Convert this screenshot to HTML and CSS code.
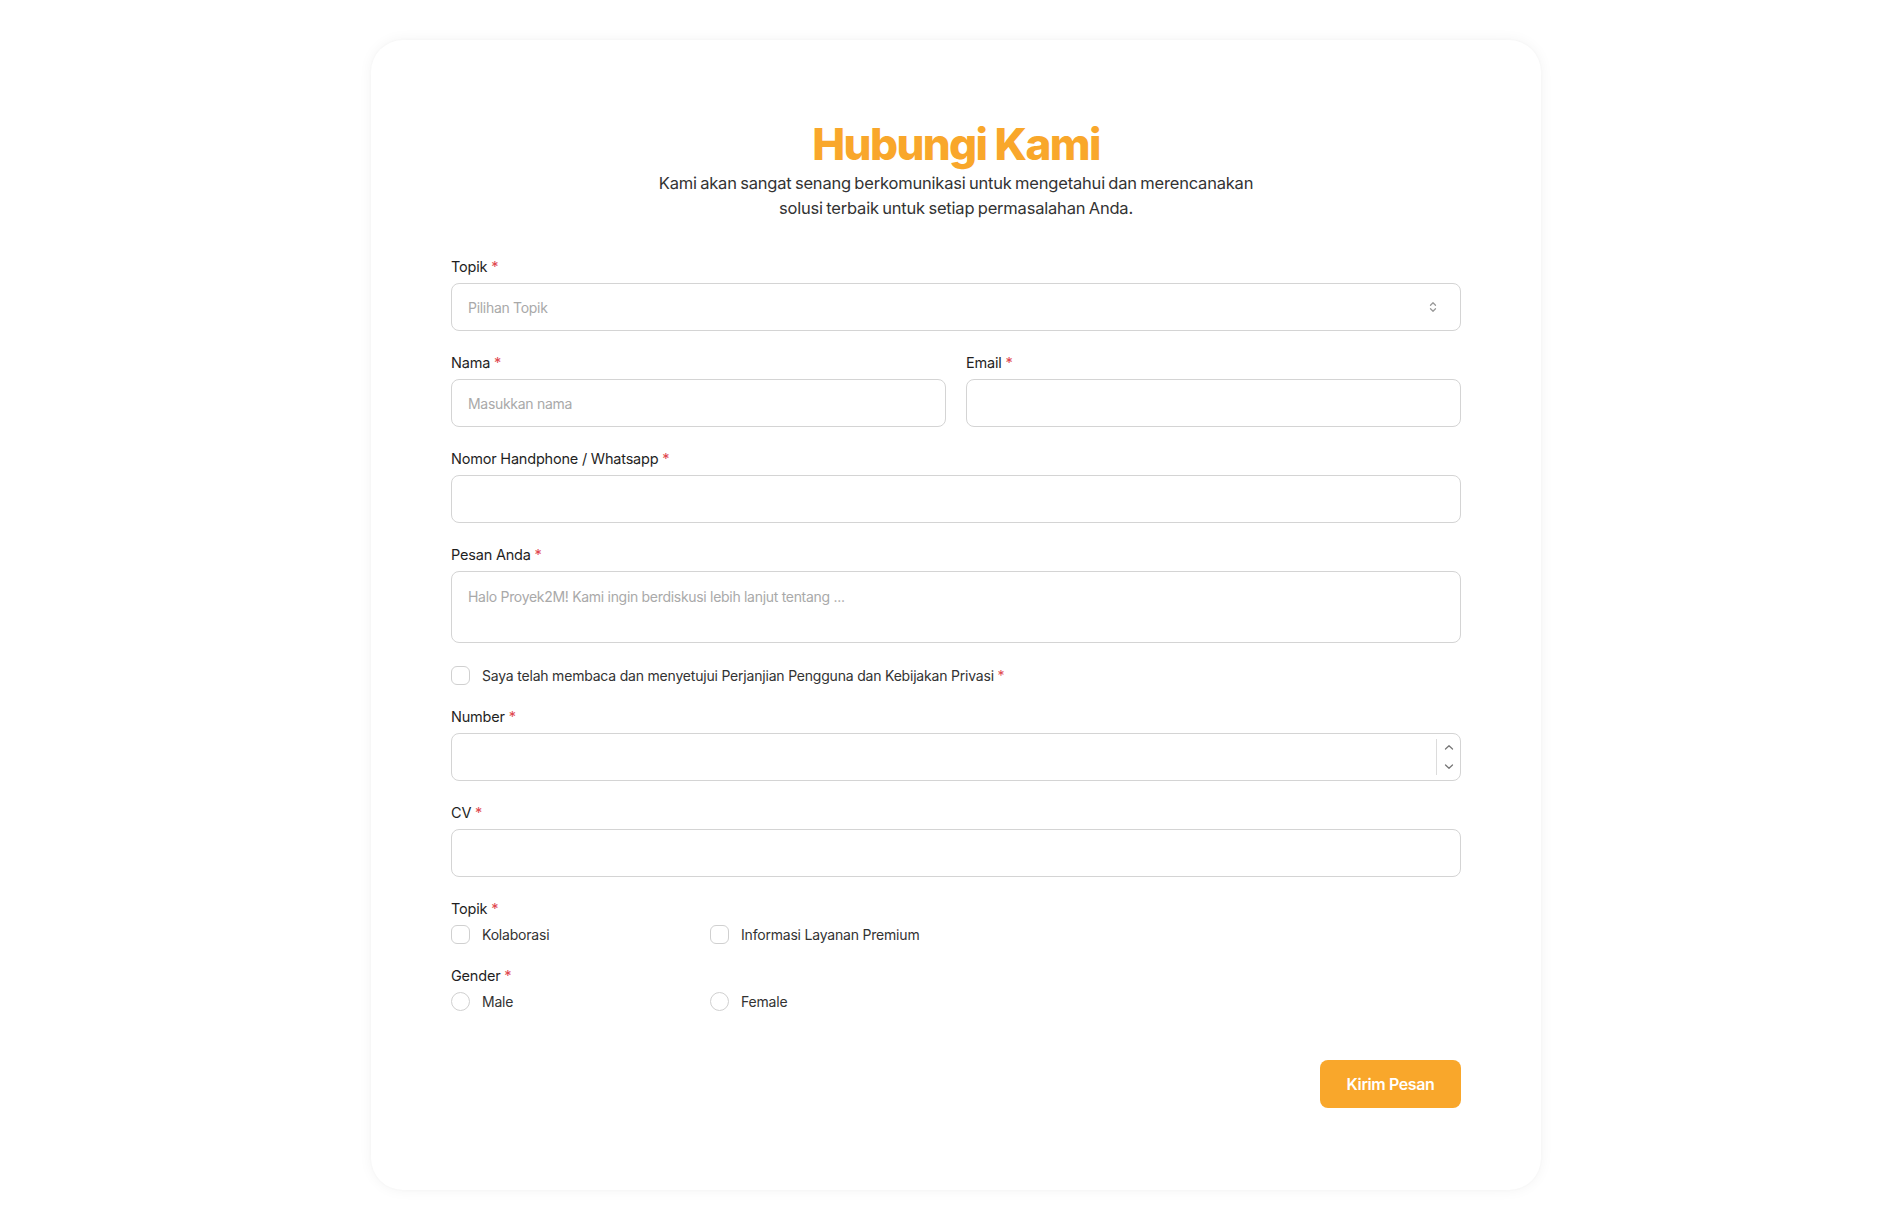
FILE: index.html
```html
<!DOCTYPE html>
<html lang="id">
<head>
<meta charset="utf-8">
<title>Hubungi Kami</title>
<link rel="stylesheet" href="styles.css">
</head>
<body>
<main class="page">
  <section class="card">
    <header class="head">
      <h1 class="title">Hubungi Kami</h1>
      <p class="subtitle">Kami akan sangat senang berkomunikasi untuk mengetahui dan merencanakan<br>solusi terbaik untuk setiap permasalahan Anda.</p>
    </header>
    <form class="form">
      <div class="field">
        <label class="label">Topik <span class="req">*</span></label>
        <div class="control select">
          <span class="placeholder">Pilihan Topik</span>
          <svg class="updown" width="10" height="12" viewBox="0 0 10 12" fill="none" stroke="#9a9a9a" stroke-width="1.3" stroke-linecap="round" stroke-linejoin="round"><path d="M2.5 4.2 5 1.7 7.5 4.2"/><path d="M2.5 7.8 5 10.3 7.5 7.8"/></svg>
        </div>
      </div>
      <div class="row2">
        <div class="field">
          <label class="label">Nama <span class="req">*</span></label>
          <div class="control"><span class="placeholder">Masukkan nama</span></div>
        </div>
        <div class="field">
          <label class="label">Email <span class="req">*</span></label>
          <div class="control"></div>
        </div>
      </div>
      <div class="field">
        <label class="label">Nomor Handphone / Whatsapp <span class="req">*</span></label>
        <div class="control"></div>
      </div>
      <div class="field">
        <label class="label">Pesan Anda <span class="req">*</span></label>
        <div class="control textarea"><span class="placeholder">Halo Proyek2M! Kami ingin berdiskusi lebih lanjut tentang ...</span></div>
      </div>
      <div class="check-line">
        <span class="box"></span>
        <span class="opt">Saya telah membaca dan menyetujui Perjanjian Pengguna dan Kebijakan Privasi <span class="req">*</span></span>
      </div>
      <div class="field">
        <label class="label">Number <span class="req">*</span></label>
        <div class="control number">
          <div class="spin">
            <svg width="10" height="7" viewBox="0 0 10 7" fill="none" stroke="#777" stroke-width="1.3" stroke-linecap="round" stroke-linejoin="round"><path d="M1.5 5 5 1.8 8.5 5"/></svg>
            <svg width="10" height="7" viewBox="0 0 10 7" fill="none" stroke="#777" stroke-width="1.3" stroke-linecap="round" stroke-linejoin="round"><path d="M1.5 2 5 5.2 8.5 2"/></svg>
          </div>
        </div>
      </div>
      <div class="field">
        <label class="label">CV <span class="req">*</span></label>
        <div class="control"></div>
      </div>
      <div class="field">
        <label class="label">Topik <span class="req">*</span></label>
        <div class="options">
          <div class="check-line"><span class="box"></span><span class="opt">Kolaborasi</span></div>
          <div class="check-line"><span class="box"></span><span class="opt">Informasi Layanan Premium</span></div>
        </div>
      </div>
      <div class="field">
        <label class="label">Gender <span class="req">*</span></label>
        <div class="options">
          <div class="check-line"><span class="box round"></span><span class="opt">Male</span></div>
          <div class="check-line"><span class="box round"></span><span class="opt">Female</span></div>
        </div>
      </div>
      <div class="actions">
        <button type="button" class="btn">Kirim Pesan</button>
      </div>
    </form>
  </section>
</main>
</body>
</html>
```
FILE: styles.css
```css
* { box-sizing: border-box; }
html, body { margin: 0; padding: 0; background: #ffffff; }
body {
  font-family: Inter, "Open Sans", "Liberation Sans", sans-serif;
  color: #2b2b2b;
}
.page {
  display: flex;
  justify-content: center;
  padding: 40px 0 38px 15px;
}
.card {
  width: 1170px;
  background: #fff;
  border-radius: 32px;
  box-shadow: 0 0 14px rgba(0, 0, 0, 0.05), 0 0 3px rgba(0, 0, 0, 0.03);
  padding: 78px 80px 82px;
}
.head { text-align: center; }
.title {
  margin: 0;
  font-size: 44px;
  line-height: 53px;
  font-weight: 800;
  color: #f9a72b;
  letter-spacing: -1.6px;
}
.subtitle {
  margin: 0;
  font-size: 16.5px;
  line-height: 25px;
  color: #333;
  letter-spacing: -0.2px;
  word-spacing: -1px;
}
.form {
  margin-top: 36px;
  display: flex;
  flex-direction: column;
  gap: 22px;
}
.field { display: flex; flex-direction: column; }
.label {
  font-size: 14.5px;
  line-height: 20px;
  font-weight: 400;
  color: #1f1f1f;
  margin-bottom: 6px;
  letter-spacing: -0.2px;
}
.req { color: #e0484f; }
.control {
  height: 48px;
  border: 1px solid #d4d4d4;
  border-radius: 8px;
  display: flex;
  align-items: center;
  padding: 0 16px;
  background: #fff;
}
.placeholder {
  font-size: 14px;
  color: #a9a9a9;
  letter-spacing: -0.3px;
}
.select { justify-content: space-between; padding-right: 22px; }
.textarea { height: 72px; align-items: flex-start; padding-top: 16px; }
.number { justify-content: flex-end; padding-right: 0; }
.spin {
  height: 36px;
  width: 24px;
  border-left: 1px solid #dcdcdc;
  display: flex;
  flex-direction: column;
  align-items: center;
  justify-content: center;
  gap: 12px;
}
.row2 {
  display: grid;
  grid-template-columns: 1fr 1fr;
  gap: 20px;
}
.check-line {
  display: flex;
  align-items: center;
  gap: 12px;
  height: 20px;
}
.box {
  width: 19px;
  height: 19px;
  border: 1px solid #d0d0d0;
  border-radius: 6px;
  flex: none;
}
.box.round { border-radius: 50%; }
.opt {
  font-size: 14px;
  color: #333;
  letter-spacing: -0.2px;
}
.options {
  display: grid;
  grid-template-columns: 259px 1fr;
  margin-top: -1px;
}
.actions {
  display: flex;
  justify-content: flex-end;
  margin-top: 27px;
}
.btn {
  height: 48px;
  width: 141px;
  border: none;
  border-radius: 8px;
  background: #f9a72b;
  color: #fff;
  font-family: inherit;
  font-size: 16px;
  font-weight: 600;
  letter-spacing: -0.4px;
}
```
